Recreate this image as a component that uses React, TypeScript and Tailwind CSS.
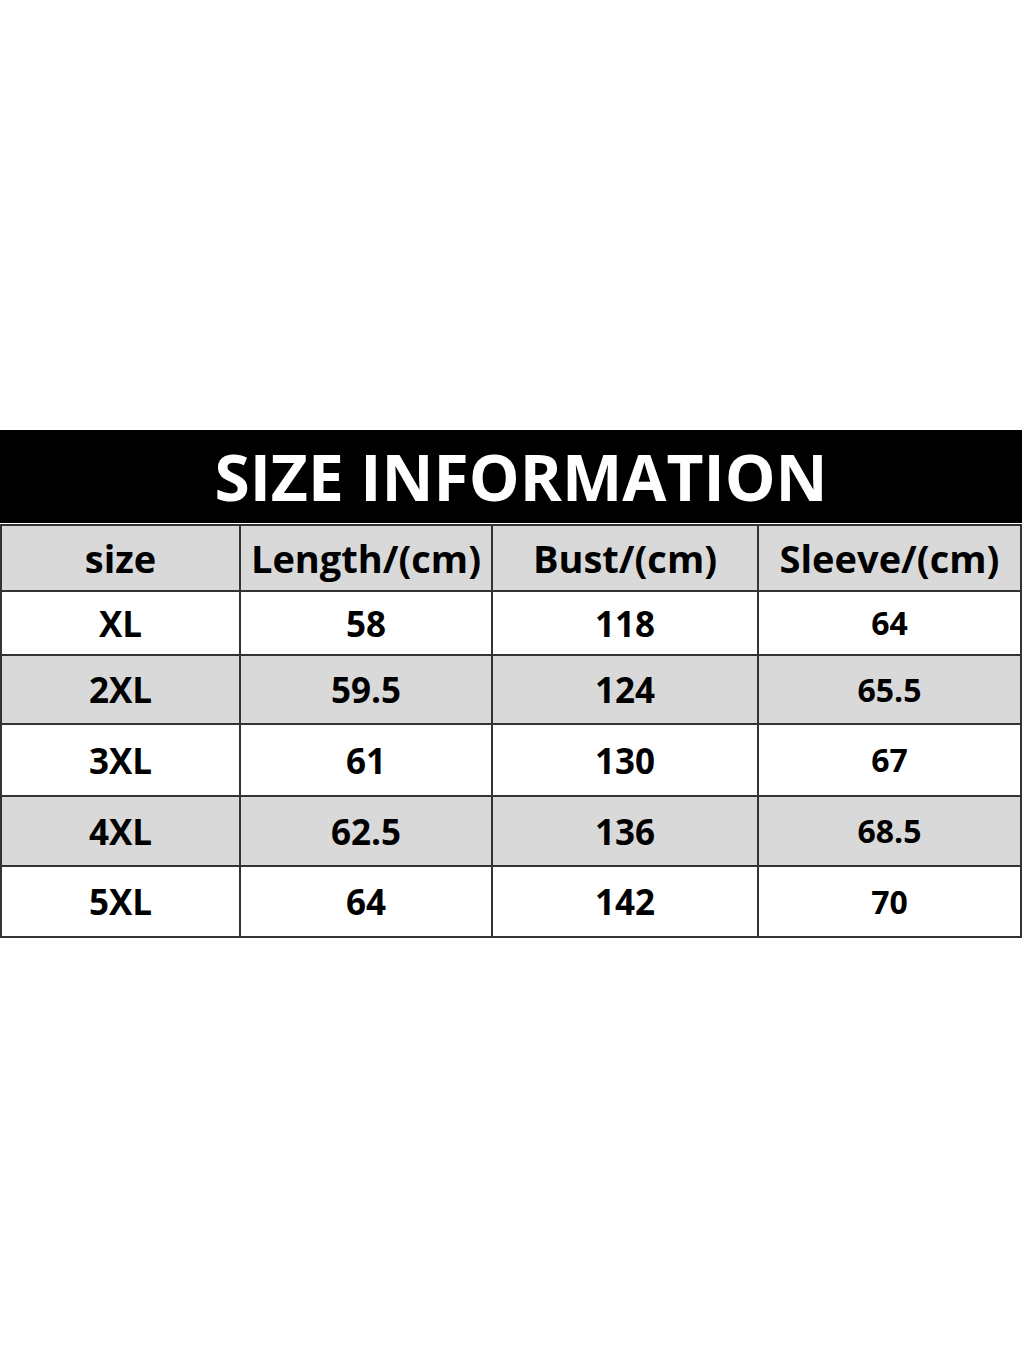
const rows = [
  { size: "XL", length: "58", bust: "118", sleeve: "64", h: "h-[64px]", gray: false },
  { size: "2XL", length: "59.5", bust: "124", sleeve: "65.5", h: "h-[69px]", gray: true },
  { size: "3XL", length: "61", bust: "130", sleeve: "67", h: "h-[72px]", gray: false },
  { size: "4XL", length: "62.5", bust: "136", sleeve: "68.5", h: "h-[70px]", gray: true },
  { size: "5XL", length: "64", bust: "142", sleeve: "70", h: "h-[69px]", gray: false },
];

const font = { fontFamily: '"Open Sans", "Liberation Sans", sans-serif' };

const App = () => {
  return (
    <div className="w-[1024px] h-[1365px] bg-white flex flex-col pt-[430px]" style={font}>
      <div className="w-[1022px] h-[93px] bg-black flex items-center justify-center pl-[20px]">
        <span className="text-white font-bold text-[64px] leading-none">SIZE INFORMATION</span>
      </div>
      <div className="w-[1022px] border-2 border-[#333] mt-[1px] font-bold text-black">
        <div className="flex h-[66px] bg-[#d9d9d9] text-[38px] leading-none border-b-2 border-[#333]">
          <div className="w-[239px] flex items-center justify-center border-r-2 border-[#333]">size</div>
          <div className="w-[252px] flex items-center justify-center border-r-2 border-[#333]">Length/(cm)</div>
          <div className="w-[266px] flex items-center justify-center border-r-2 border-[#333]">Bust/(cm)</div>
          <div className="flex-1 flex items-center justify-center">Sleeve/(cm)</div>
        </div>
        {rows.map((r, i) => (
          <div
            key={r.size}
            className={`flex ${r.h} leading-none ${r.gray ? "bg-[#d9d9d9]" : "bg-white"} ${i < rows.length - 1 ? "border-b-2 border-[#333]" : ""}`}
          >
            <div className="w-[239px] flex items-center justify-center border-r-2 border-[#333] text-[35px]">{r.size}</div>
            <div className="w-[252px] flex items-center justify-center border-r-2 border-[#333] text-[35px]">{r.length}</div>
            <div className="w-[266px] flex items-center justify-center border-r-2 border-[#333] text-[35px]">{r.bust}</div>
            <div className="flex-1 flex items-center justify-center text-[32px]">{r.sleeve}</div>
          </div>
        ))}
      </div>
    </div>
  );
};

export default App;
